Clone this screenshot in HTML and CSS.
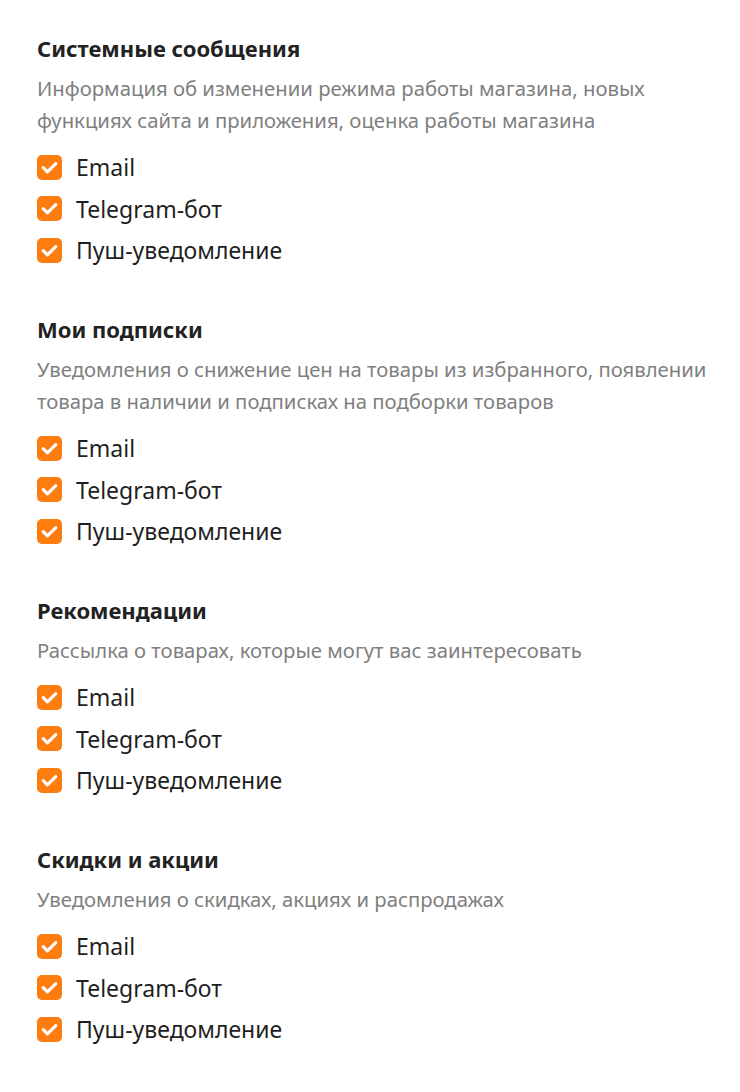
FILE: index.html
```html
<!DOCTYPE html>
<html lang="ru">
<head>
    <meta charset="UTF-8">
    <meta name="viewport" content="width=device-width, initial-scale=1.0">
    <title>Уведомления</title>
    <link rel="stylesheet" href="styles.css">
</head>
<body>
    <div class="container">
        <section class="group">
            <h2>Системные сообщения</h2>
            <p class="hint">Информация об изменении режима работы магазина, новых функциях сайта и приложения, оценка работы магазина</p>
            <div class="options">
                <label class="option"><input type="checkbox" checked><span class="box"><svg viewBox="0 0 24 24"><path d="M6 12.2l4 4L18 8.2"/></svg></span>Email</label>
                <label class="option"><input type="checkbox" checked><span class="box"><svg viewBox="0 0 24 24"><path d="M6 12.2l4 4L18 8.2"/></svg></span>Telegram-бот</label>
                <label class="option"><input type="checkbox" checked><span class="box"><svg viewBox="0 0 24 24"><path d="M6 12.2l4 4L18 8.2"/></svg></span>Пуш-уведомление</label>
            </div>
        </section>

        <section class="group">
            <h2>Мои подписки</h2>
            <p class="hint">Уведомления о снижение цен на товары из избранного, появлении товара в наличии и подписках на подборки товаров</p>
            <div class="options">
                <label class="option"><input type="checkbox" checked><span class="box"><svg viewBox="0 0 24 24"><path d="M6 12.2l4 4L18 8.2"/></svg></span>Email</label>
                <label class="option"><input type="checkbox" checked><span class="box"><svg viewBox="0 0 24 24"><path d="M6 12.2l4 4L18 8.2"/></svg></span>Telegram-бот</label>
                <label class="option"><input type="checkbox" checked><span class="box"><svg viewBox="0 0 24 24"><path d="M6 12.2l4 4L18 8.2"/></svg></span>Пуш-уведомление</label>
            </div>
        </section>

        <section class="group">
            <h2>Рекомендации</h2>
            <p class="hint">Рассылка о товарах, которые могут вас заинтересовать</p>
            <div class="options">
                <label class="option"><input type="checkbox" checked><span class="box"><svg viewBox="0 0 24 24"><path d="M6 12.2l4 4L18 8.2"/></svg></span>Email</label>
                <label class="option"><input type="checkbox" checked><span class="box"><svg viewBox="0 0 24 24"><path d="M6 12.2l4 4L18 8.2"/></svg></span>Telegram-бот</label>
                <label class="option"><input type="checkbox" checked><span class="box"><svg viewBox="0 0 24 24"><path d="M6 12.2l4 4L18 8.2"/></svg></span>Пуш-уведомление</label>
            </div>
        </section>

        <section class="group">
            <h2>Скидки и акции</h2>
            <p class="hint">Уведомления о скидках, акциях и распродажах</p>
            <div class="options">
                <label class="option"><input type="checkbox" checked><span class="box"><svg viewBox="0 0 24 24"><path d="M6 12.2l4 4L18 8.2"/></svg></span>Email</label>
                <label class="option"><input type="checkbox" checked><span class="box"><svg viewBox="0 0 24 24"><path d="M6 12.2l4 4L18 8.2"/></svg></span>Telegram-бот</label>
                <label class="option"><input type="checkbox" checked><span class="box"><svg viewBox="0 0 24 24"><path d="M6 12.2l4 4L18 8.2"/></svg></span>Пуш-уведомление</label>
            </div>
        </section>
    </div>
</body>
</html>
```

FILE: styles.css
```css
body {
    font-family: "Noto Sans", Arial, sans-serif;
    margin: 0;
    padding: 0;
    background-color: #fff;
    color: #1f1f1f;
}

.container {
    padding: 32px 28px 0 37px;
}

.group {
    margin-bottom: 47px;
}

h2 {
    font-size: 22px;
    font-weight: bold;
    line-height: 32px;
    margin: 0 0 8px;
    color: #222;
}

.hint {
    font-size: 20.3px;
    line-height: 32px;
    margin: 0 0 15px;
    color: #7f7f7f;
}

.options {
    display: flex;
    flex-direction: column;
    gap: 9.5px;
}

.option {
    display: flex;
    align-items: center;
    gap: 14px;
    font-size: 23px;
    line-height: 32px;
    cursor: pointer;
}

.option input {
    display: none;
}

.box {
    width: 25px;
    height: 25px;
    border-radius: 5px;
    background-color: #ff7d0f;
    display: flex;
    align-items: center;
    justify-content: center;
}

.box svg {
    width: 25px;
    height: 25px;
    fill: none;
    stroke: #fff;
    stroke-width: 3;
    stroke-linecap: round;
    stroke-linejoin: round;
}
```
